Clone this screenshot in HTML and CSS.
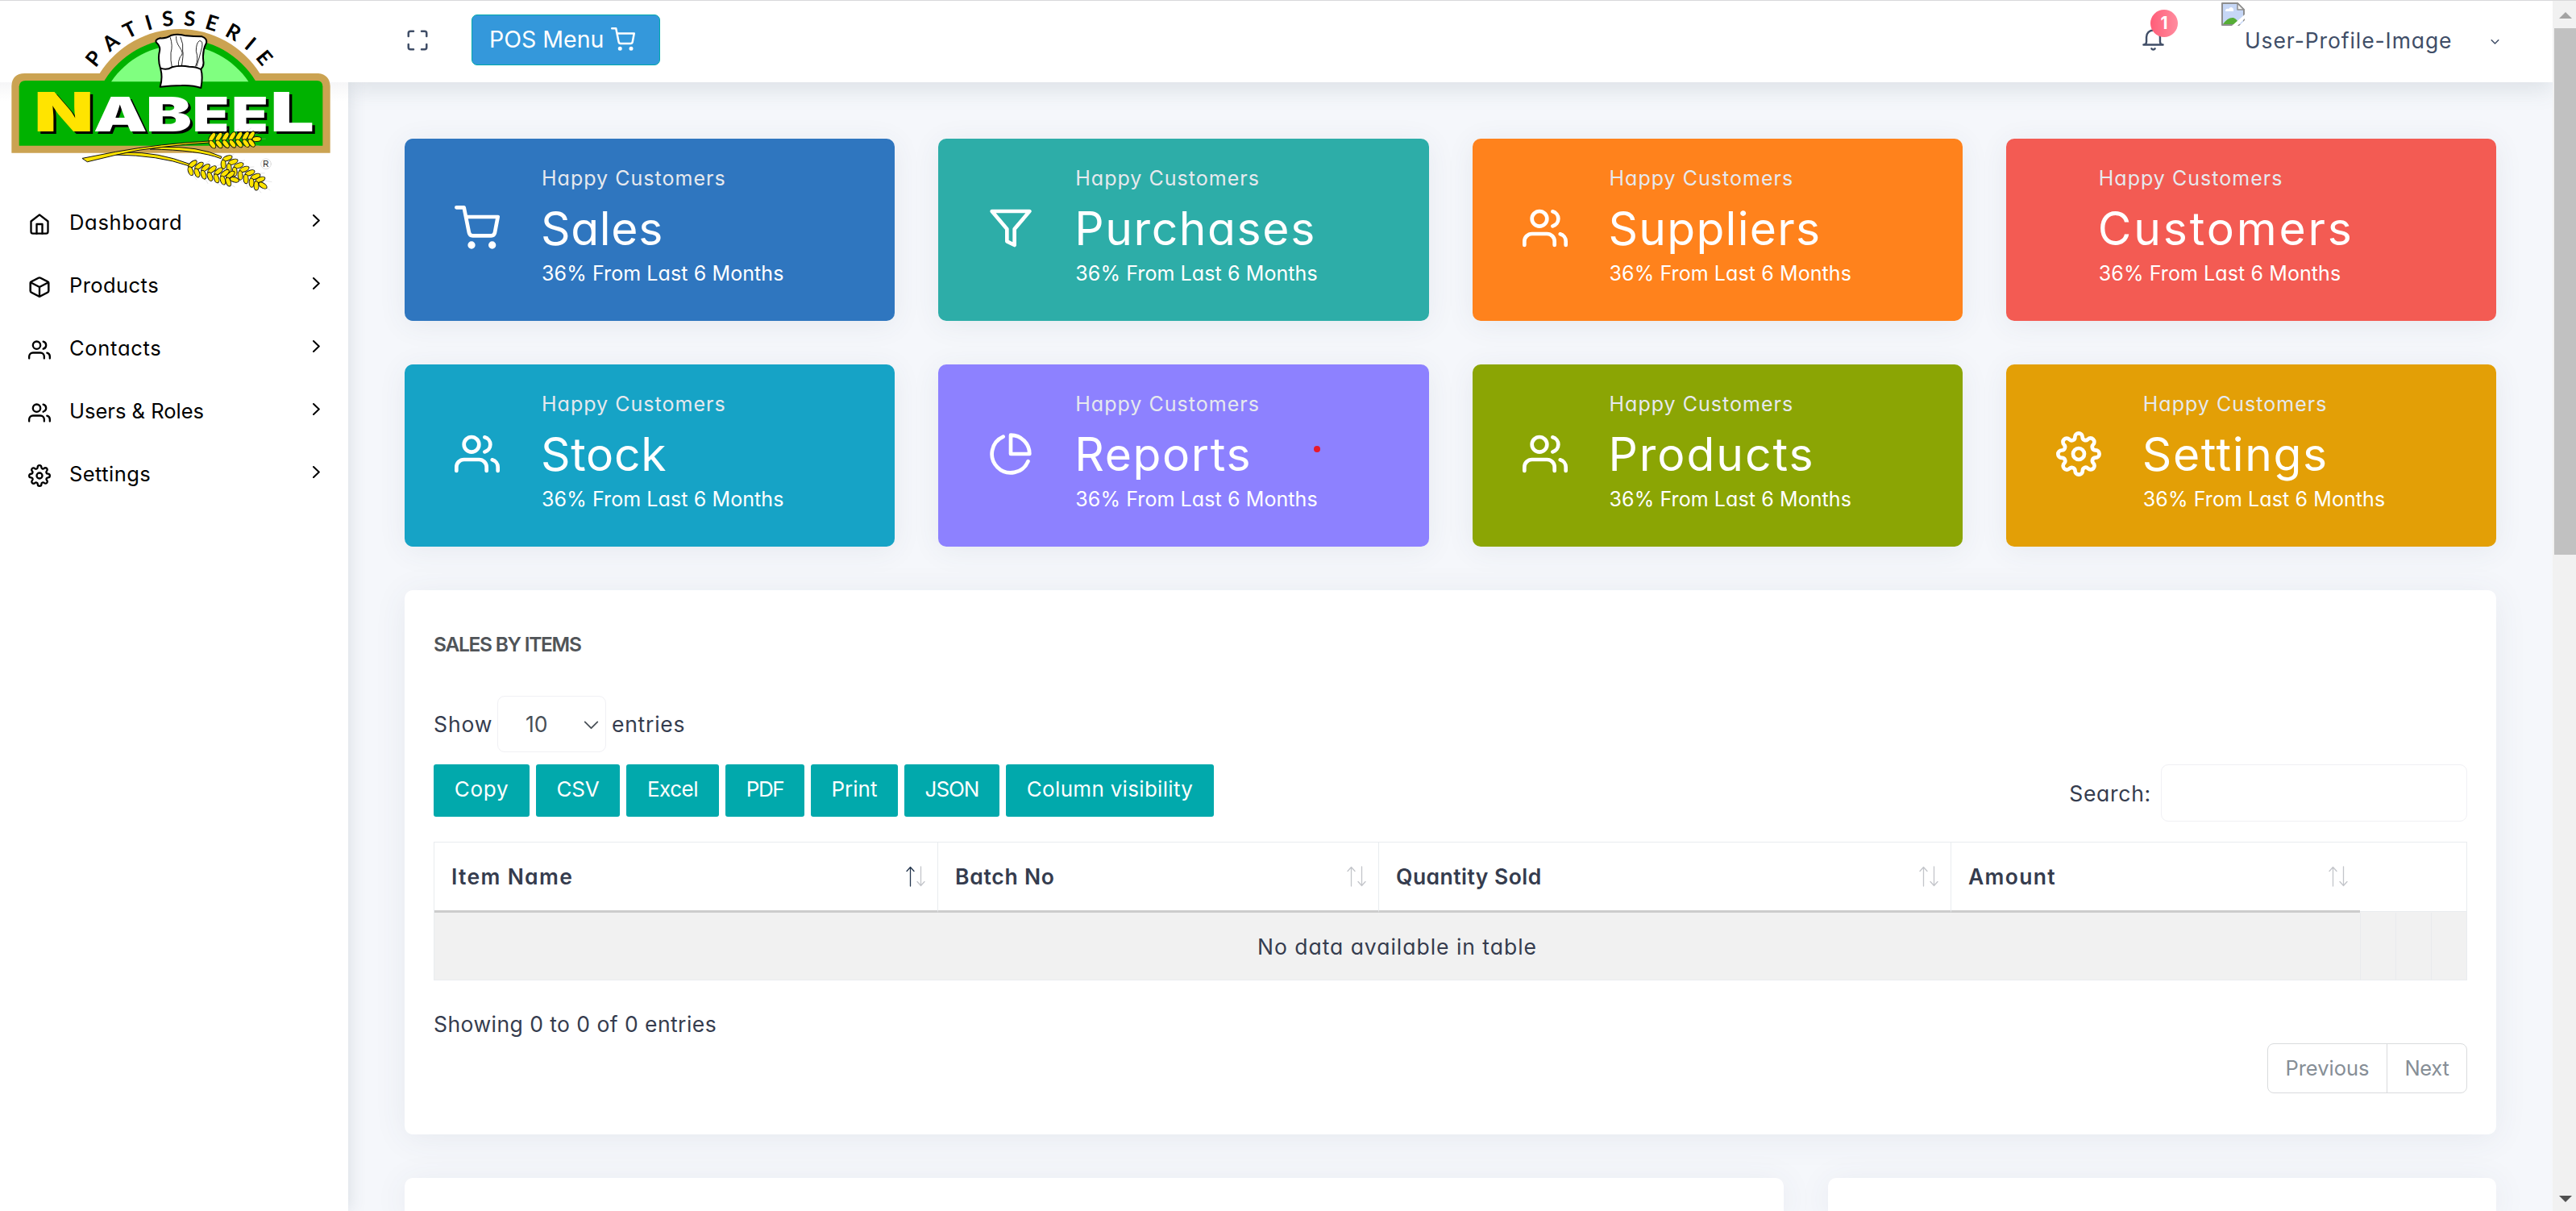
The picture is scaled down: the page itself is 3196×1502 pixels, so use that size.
FILE: index.html
```html
<!DOCTYPE html>
<html lang="en">
<head>
<meta charset="utf-8">
<title>Dashboard</title>
<link rel="stylesheet" href="styles.css">
</head>
<body>
<svg class="sprite" width="0" height="0" aria-hidden="true">
  <defs>
    <symbol id="cart" viewBox="0 0 24 24"><circle cx="9" cy="21" r="1"/><circle cx="20" cy="21" r="1"/><path d="M1 1h4l2.68 13.39a2 2 0 0 0 2 1.61h9.72a2 2 0 0 0 2-1.61L23 6H6"/></symbol>
    <symbol id="users" viewBox="0 0 24 24"><path d="M17 21v-2a4 4 0 0 0-4-4H5a4 4 0 0 0-4 4v2"/><circle cx="9" cy="7" r="4"/><path d="M23 21v-2a4 4 0 0 0-3-3.87M16 3.13a4 4 0 0 1 0 7.75"/></symbol>
    <symbol id="filter" viewBox="0 0 24 24"><path d="M22 3H2l8 9.46V19l4 2v-8.54L22 3z"/></symbol>
    <symbol id="pie" viewBox="0 0 24 24"><path d="M21.21 15.89A10 10 0 1 1 8 2.83"/><path d="M22 12A10 10 0 0 0 12 2v10z"/></symbol>
    <symbol id="gear" viewBox="0 0 24 24"><circle cx="12" cy="12" r="3"/><path d="M19.4 15a1.65 1.65 0 0 0 .33 1.82l.06.06a2 2 0 0 1 0 2.83 2 2 0 0 1-2.83 0l-.06-.06a1.65 1.65 0 0 0-1.82-.33 1.65 1.65 0 0 0-1 1.51V21a2 2 0 0 1-2 2 2 2 0 0 1-2-2v-.09A1.65 1.65 0 0 0 9 19.4a1.65 1.65 0 0 0-1.82.33l-.06.06a2 2 0 0 1-2.83 0 2 2 0 0 1 0-2.83l.06-.06a1.65 1.65 0 0 0 .33-1.82 1.65 1.65 0 0 0-1.51-1H3a2 2 0 0 1-2-2 2 2 0 0 1 2-2h.09A1.65 1.65 0 0 0 4.6 9a1.65 1.65 0 0 0-.33-1.82l-.06-.06a2 2 0 0 1 0-2.83 2 2 0 0 1 2.83 0l.06.06a1.65 1.65 0 0 0 1.82.33H9a1.65 1.65 0 0 0 1-1.51V3a2 2 0 0 1 2-2 2 2 0 0 1 2 2v.09a1.65 1.65 0 0 0 1 1.51 1.65 1.65 0 0 0 1.82-.33l.06-.06a2 2 0 0 1 2.83 0 2 2 0 0 1 0 2.83l-.06.06a1.65 1.65 0 0 0-.33 1.82V9a1.65 1.65 0 0 0 1.51 1H21a2 2 0 0 1 2 2 2 2 0 0 1-2 2h-.09a1.65 1.65 0 0 0-1.51 1z"/></symbol>
    <symbol id="home" viewBox="0 0 24 24"><path d="M3 9l9-7 9 7v11a2 2 0 0 1-2 2H5a2 2 0 0 1-2-2z"/><path d="M9 22V12h6v10"/></symbol>
    <symbol id="box" viewBox="0 0 24 24"><path d="M21 16V8a2 2 0 0 0-1-1.73l-7-4a2 2 0 0 0-2 0l-7 4A2 2 0 0 0 3 8v8a2 2 0 0 0 1 1.73l7 4a2 2 0 0 0 2 0l7-4A2 2 0 0 0 21 16z" transform="translate(-.9 0) scale(1.075 1)"/><path d="M2.5 7l9.5 5 9.5-5M12 22V12"/></symbol>
    <symbol id="maximize" viewBox="0 0 24 24"><path d="M8 3H5a2 2 0 0 0-2 2v3m18 0V5a2 2 0 0 0-2-2h-3m0 18h3a2 2 0 0 0 2-2v-3M3 16v3a2 2 0 0 0 2 2h3"/></symbol>
    <symbol id="bell" viewBox="0 0 24 24"><path d="M22 17H2a3 3 0 0 0 3-3V9a7 7 0 0 1 14 0v5a3 3 0 0 0 3 3zM13.73 21a2 2 0 0 1-3.46 0"/></symbol>
    <symbol id="right" viewBox="0 0 9 15"><path d="M1 1l6.8 6.5L1 14"/></symbol>
    <symbol id="down" viewBox="0 0 20 12"><path d="M1.500 1.500L10 10l8.500-8.500"/></symbol>
    <symbol id="sort" viewBox="0 0 24 26"><path class="up" d="M5.500 25V2M1 6.500L5.500 1.500l4.500 5"/><path d="M18.500 1v23M14 19.500l4.500 5 4.500-5"/></symbol>
    <g id="ear" fill="#ffe400" stroke="#111" stroke-width="3">
      <path d="M20-25l10-14M60-26l16-16M100-26l18-14M140-24l24-18M30 25l18 14M75 25l18 16M120 24l20 12M165 18l28 8M170-15l34-14M190 0h26" stroke="#bbb" stroke-width="1" fill="none"/>
      <g id="row"><ellipse cx="18" cy="-13" rx="19" ry="9" transform="rotate(-55 18 -13)"/><ellipse cx="18" cy="14" rx="17" ry="9" transform="rotate(55 18 14)"/></g>
      <use href="#row" x="25"/><use href="#row" x="50"/><use href="#row" x="75"/><use href="#row" x="100"/><use href="#row" x="125"/><use href="#row" x="146"/>
      <ellipse cx="184" cy="0" rx="17" ry="9"/>
    </g>
  </defs>
</svg>

<aside class="sidebar">
  <a class="brand">
    <svg viewBox="0 0 1320 750" width="440" height="250">
      <path d="M43 569V320Q45 273 92 273H371A352 352 0 0 1 967 273H1185Q1227 278 1229 320V569Z" fill="#cba352"/>
      <path d="M388 301A330 330 0 0 1 951 301Z" fill="#00b200"/>
      <path d="M71 542V322Q73 300 95 300H1180Q1201 301 1201 322V542Z" fill="#00b200"/>
      <path d="M414 304A308 308 0 0 1 925 304Z" fill="#80ff80"/>
      <path id="arc" d="M356 254A385 385 0 0 1 980 254" fill="none"/>
      <text class="arch"><textPath href="#arc" textLength="722" lengthAdjust="spacing">PATISSERIE</textPath></text>
      <g fill="#fff" stroke="#000" stroke-width="6" stroke-linejoin="round">
        <path d="M598 258Q586 222 594 190Q598 172 582 158Q575 148 596 142Q618 144 638 131Q664 124 692 133Q722 136 752 136Q772 144 768 160Q752 190 757 228Q760 246 748 257Q756 285 748 327Q716 316 676 318Q636 318 596 323Q606 290 598 258Z"/>
        <path d="M598 254Q620 262 640 250Q670 242 704 248Q730 248 748 258" fill="none"/>
        <path d="M634 140Q644 170 636 196Q634 225 640 250M656 136C652 175 696 190 670 212Q662 230 664 246M672 138Q684 165 680 190Q684 200 676 246M732 246Q742 215 752 175Q756 150 742 152Q730 160 730 190Q740 220 728 246" stroke-width="2.500" fill="none"/>
      </g>
      <g class="wordmark">
        <g fill="#000" transform="translate(10 7)">
          <text class="cap" x="127" y="490" textLength="222" lengthAdjust="spacingAndGlyphs">N</text><text x="348" y="490" textLength="200" lengthAdjust="spacingAndGlyphs">A</text><text x="543" y="490" textLength="171" lengthAdjust="spacingAndGlyphs">B</text><text x="716" y="490" textLength="137" lengthAdjust="spacingAndGlyphs">E</text><text x="862" y="490" textLength="137" lengthAdjust="spacingAndGlyphs">E</text><text class="cap" x="1006" y="490" textLength="164" lengthAdjust="spacingAndGlyphs">L</text>
        </g>
        <g fill="#fff">
          <text class="cap yellow" x="127" y="490" textLength="222" lengthAdjust="spacingAndGlyphs">N</text><text x="348" y="490" textLength="200" lengthAdjust="spacingAndGlyphs">A</text><text x="543" y="490" textLength="171" lengthAdjust="spacingAndGlyphs">B</text><text x="716" y="490" textLength="137" lengthAdjust="spacingAndGlyphs">E</text><text x="862" y="490" textLength="137" lengthAdjust="spacingAndGlyphs">E</text><text class="cap" x="1006" y="490" textLength="164" lengthAdjust="spacingAndGlyphs">L</text>
        </g>
      </g>
      <g fill="#ffe400" stroke="#111" stroke-width="3">
        <path d="M468 567Q590 565 705 610L702 617Q590 578 430 576Z"/>
        <path d="M600 547Q740 543 825 583L822 590Q740 558 560 555Z"/>
        <path d="M307 589L430 565Q600 534 778 525V531Q690 536 606 547Q520 555 430 577L326 602Z"/>
      </g>
      <use href="#ear" transform="translate(772 524) rotate(-2)"/>
      <use href="#ear" transform="translate(824 590) rotate(33)"/>
      <use href="#ear" transform="translate(696 618) rotate(16)"/>
      <circle cx="990" cy="610" r="19" fill="#fff" stroke="#ccc"/>
      <text class="reg" x="979" y="621">R</text>
    </svg>
  </a>
  <nav class="menu">
    <a class="item"><svg class="ico"><use href="#home"/></svg><span class="label t4">Dashboard</span><svg class="go"><use href="#right"/></svg></a>
    <a class="item"><svg class="ico"><use href="#box"/></svg><span class="label t3">Products</span><svg class="go"><use href="#right"/></svg></a>
    <a class="item"><svg class="ico"><use href="#users"/></svg><span class="label t4">Contacts</span><svg class="go"><use href="#right"/></svg></a>
    <a class="item"><svg class="ico"><use href="#users"/></svg><span class="label">Users &amp; Roles</span><svg class="go"><use href="#right"/></svg></a>
    <a class="item"><svg class="ico"><use href="#gear"/></svg><span class="label t3">Settings</span><svg class="go"><use href="#right"/></svg></a>
  </nav>
</aside>

<div class="page">
  <header class="topbar">
    <svg class="full"><use href="#maximize"/></svg>
    <a class="pos"><span>POS Menu</span><svg><use href="#cart"/></svg></a>
    <div class="notify"><svg><use href="#bell"/></svg><span class="badge">1</span></div>
    <div class="profile">
      <svg class="broken" viewBox="0 0 29 29"><path d="M1 1h19l8 8v19H1z" fill="#c6d7f6" stroke="#8e8e8e" stroke-width="2"/><path d="M5 11q0-4 4-3 3-4 6 0v3z" fill="#fff"/><path d="M2 27q6-9 13-8 5 2 7 8z" fill="#56ad36"/><path d="M20 1v8h8z" fill="#f4f4f4" stroke="#8e8e8e" stroke-width="1.500"/><path d="M13 29L29 15v5L20 29z" fill="#fff"/><path d="M22 29l7-7v7z" fill="#fff"/></svg>
      <span class="t45">User-Profile-Image</span>
      <svg class="caret"><use href="#down"/></svg>
    </div>
  </header>

  <main class="content">
    <section class="cards">
      <a class="card blue"><svg><use href="#cart"/></svg><div><p class="sub">Happy Customers</p><h2 class="t25">Sales</h2><p class="note">36% From Last 6 Months</p></div></a>
      <a class="card teal"><svg><use href="#filter"/></svg><div><p class="sub">Happy Customers</p><h2 class="t4">Purchases</h2><p class="note">36% From Last 6 Months</p></div></a>
      <a class="card orange"><svg><use href="#users"/></svg><div><p class="sub">Happy Customers</p><h2 class="t35">Suppliers</h2><p class="note">36% From Last 6 Months</p></div></a>
      <a class="card red"><div><p class="sub">Happy Customers</p><h2 class="t6">Customers</h2><p class="note">36% From Last 6 Months</p></div></a>
      <a class="card cyan"><svg><use href="#users"/></svg><div><p class="sub">Happy Customers</p><h2 class="t25">Stock</h2><p class="note">36% From Last 6 Months</p></div></a>
      <a class="card violet"><svg><use href="#pie"/></svg><div><p class="sub">Happy Customers</p><h2 class="t4">Reports</h2><p class="note">36% From Last 6 Months</p></div><i class="dot"></i></a>
      <a class="card olive"><svg><use href="#users"/></svg><div><p class="sub">Happy Customers</p><h2 class="t45">Products</h2><p class="note">36% From Last 6 Months</p></div></a>
      <a class="card gold"><svg><use href="#gear"/></svg><div><p class="sub">Happy Customers</p><h2 class="t4">Settings</h2><p class="note">36% From Last 6 Months</p></div></a>
    </section>

    <section class="panel report">
      <h5 class="title">SALES BY ITEMS</h5>
      <div class="length"><span class="show t45">Show</span><div class="select"><span>10</span><svg><use href="#down"/></svg></div><span class="t4">entries</span></div>
      <div class="tools">
        <div class="buttons">
          <button class="w119 t4">Copy</button><button class="w104 n1">CSV</button><button class="w115 n2">Excel</button><button class="w98 n5">PDF</button><button class="w108">Print</button><button class="w118 n4">JSON</button><button class="w258 t15">Column visibility</button>
        </div>
        <label class="search"><span class="t4">Search:</span><input type="text"></label>
      </div>
      <table>
        <colgroup><col class="c1"><col class="c2"><col class="c3"><col class="c4"><col class="c5"><col class="c5"><col class="c5"></colgroup>
        <thead><tr>
          <th><div class="th active"><span class="t6">Item Name</span><svg><use href="#sort"/></svg></div></th>
          <th><div class="th"><span class="t4">Batch No</span><svg><use href="#sort"/></svg></div></th>
          <th><div class="th"><span class="t3">Quantity Sold</span><svg><use href="#sort"/></svg></div></th>
          <th><div class="th"><span class="t6">Amount</span><svg><use href="#sort"/></svg></div></th>
          <th class="blank" colspan="3"></th>
        </tr></thead>
        <tbody><tr><td colspan="4" class="t5">No data available in table</td><td></td><td></td><td></td></tr></tbody>
      </table>
      <p class="info t3">Showing 0 to 0 of 0 entries</p>
      <div class="pager"><a class="prev">Previous</a><a class="next n1">Next</a></div>
    </section>

    <section class="bottom"><div class="panel"></div><div class="panel"></div></section>
  </main>
</div>

<div class="scroll">
  <svg viewBox="0 0 16 8"><path d="M0 8L8 0l8 8z" fill="#a3a3a3"/></svg>
  <i class="thumb"></i>
  <svg class="bottom-arrow" viewBox="0 0 16 8"><path d="M0 0l8 8 8-8z" fill="#505050"/></svg>
</div>
</body>
</html>
```
FILE: styles.css
```css
* { box-sizing: border-box; margin: 0; padding: 0; }

body {
  display: flex;
  height: 1502px;
  overflow: hidden;
  border-top: 1px solid #d8d8da;
  background: #f5f7fb;
  color: #353c4e;
  font-family: Inter, "Noto Sans", sans-serif;
  font-size: 26.500px;
  line-height: 36px;
  font-feature-settings: "cv11";
  white-space: nowrap;
}

svg { flex: none; fill: none; stroke: currentColor; stroke-width: 2; stroke-linecap: round; stroke-linejoin: round; overflow: visible; }
.sprite { position: absolute; }

/* letter spacing steps */
.t15 { letter-spacing: .012em; }
.t25 { letter-spacing: .012em; }
.t3 { letter-spacing: .017em; }
.t35 { letter-spacing: .022em; }
.t4 { letter-spacing: .028em; }
.t45 { letter-spacing: .034em; }
.t5 { letter-spacing: .037em; }
.t6 { letter-spacing: .05em; }
.n1 { letter-spacing: -.01em; }
.n2 { letter-spacing: -.02em; }
.n4 { letter-spacing: -.04em; }
.n5 { letter-spacing: -.055em; }

/* sidebar */
.sidebar {
  position: relative;
  z-index: 2;
  flex: none;
  width: 432px;
  background: linear-gradient(#fff 101px, #f6f6f7 101px, #fff 125px);
  box-shadow: 1px 0 20px rgba(69, 90, 100, .16);
}
.brand { display: flex; align-items: flex-start; height: 236.500px; }
.brand svg { margin-top: -1px; stroke: none; }
.arch { font: 700 77px Lato, sans-serif; fill: #000; }
.wordmark text { font: 900 179px Inter, sans-serif; }
.wordmark .cap { font-size: 204px; }
.wordmark .yellow { fill: #ffe400; }
.reg { font: 30px "Liberation Sans", sans-serif; fill: #111; }

.item { display: flex; align-items: center; height: 77.800px; padding: 0 35px 0 35px; color: #000; font-size: 25.500px; }
.ico { width: 28px; height: 28px; margin-top: 4px; }
.label { margin-left: 23px; flex: 1; }
.go { width: 9px; height: 15px; margin-bottom: 5px; }

/* top bar */
.page { flex: 1; min-width: 0; display: flex; flex-direction: column; }
.topbar {
  position: relative;
  z-index: 3;
  display: flex;
  align-items: center;
  flex: none;
  height: 101px;
  padding: 0 66px 4px 71px;
  background: #fff;
  box-shadow: 0 10px 25px rgba(69, 90, 100, .13);
  clip-path: inset(0 0 -40px 0);
  color: #404e67;
}
.full { width: 30px; height: 30px; margin-top: 1px; }
.pos {
  display: flex;
  align-items: center;
  width: 234px;
  height: 63px;
  margin-left: 52px;
  padding: 0 0 2px 21px;
  border: 1px solid #01a9ac;
  border-radius: 7px;
  background: #3498db;
  color: #fff;
  font-size: 28.500px;
}
.pos svg { width: 30px; height: 30px; margin-left: 9px; }
.notify { position: relative; margin-left: auto; width: 29px; height: 29px; margin-right: 100px; }
.notify svg { width: 29px; height: 29px; }
.badge {
  position: absolute;
  left: 11px;
  top: -23px;
  width: 34px;
  height: 34px;
  border-radius: 50%;
  background: linear-gradient(90deg, #ff5d78, #ff8c9f);
  color: #fff;
  font-size: 21px;
  font-weight: 700;
  line-height: 34px;
  text-align: center;
}
.profile { display: flex; align-items: center; }
.broken { width: 29px; height: 29px; stroke: none; margin: -64px 1px 0 -30px; }
.profile span { margin-left: -1px; width: 259px; }
.caret { width: 11px; height: 6px; margin-left: 46px; margin-top: 4px; stroke-width: 3; }

/* cards */
.content { padding: 70px 70px 0; }
.cards { display: grid; grid-template-columns: repeat(4, 1fr); gap: 54px; }
.card {
  position: relative;
  display: flex;
  height: 226px;
  padding: 29px 0 0 62px;
  border-radius: 10px;
  color: #fff;
  box-shadow: 0 5px 35px rgba(69, 80, 100, .08);
}
.card svg { width: 56px; height: 56px; margin: 53.500px 52px 0 0; }
.sub { color: #e6e9ee; font-size: 25px; line-height: 40px; letter-spacing: .041em; }
.card h2 { font-size: 57px; font-weight: 400; line-height: 86px; margin-left: -1px; }
.note { font-size: 25px; line-height: 24px; letter-spacing: .004em; }
.blue { background: #2f76bf; }
.teal { background: #2dada8; }
.orange { background: #ff821c; }
.red { background: #f35b53; padding-left: 115px; }
.cyan { background: #16a3c6; }
.violet { background: #8d81ff; }
.olive { background: #8ba504; }
.gold { background: #e39f06; }
.dot { position: absolute; left: 466px; top: 101px; width: 8px; height: 8px; border-radius: 50%; background: #e8192c; }

/* report panel */
.panel { border-radius: 10px; background: #fff; box-shadow: 0 5px 40px rgba(69, 80, 100, .08); }
.report { height: 675px; margin-top: 54px; padding: 49px 36px 0; }
.title { color: #505458; font-size: 24.500px; font-weight: 600; letter-spacing: -.052em; }
.length { display: flex; align-items: center; height: 70px; margin-top: 46px; }
.show { width: 79px; }
.select {
  display: flex;
  align-items: center;
  justify-content: space-between;
  width: 135px;
  height: 70px;
  margin-right: 7px;
  padding: 0 8px 0 34px;
  border: 1px solid #f0f0f4;
  border-radius: 9px;
  color: #495057;
}
.select svg { width: 19px; height: 11px; margin-top: 2px; }
.tools { display: flex; justify-content: space-between; height: 71px; margin-top: 15px; }
.buttons { display: flex; gap: 8px; }
button {
  height: 65px;
  padding-bottom: 3px;
  border: 0;
  border-radius: 3px;
  background: #01a9ac;
  color: #fff;
  font: inherit;
  font-feature-settings: inherit;
  font-size: 26px;
}
.w119 { width: 119px; } .w104 { width: 104px; } .w115 { width: 115px; } .w98 { width: 98px; }
.w108 { width: 108px; } .w118 { width: 118px; } .w258 { width: 258px; }
.search { display: flex; align-items: center; gap: 12px; }
.search input { width: 380px; height: 71px; border: 1px solid #f0f0f4; border-radius: 9px; }

table { width: 2523px; margin-top: 25px; table-layout: fixed; border-collapse: separate; border-spacing: 0; border: 1px solid #e9ecef; border-width: 1px 1px 0; }
.c1 { width: 624px; } .c2 { width: 547px; } .c3 { width: 710px; } .c4 { width: 508px; } .c5 { width: 44px; }
th { height: 87px; border-bottom: 3px solid #ccc; text-align: left; font-weight: 600; }
th + th { border-left: 1px solid #e9ecef; }
.th { display: flex; align-items: center; justify-content: space-between; padding: 0 15px 0 21px; }
.th svg { width: 24px; height: 26px; stroke-width: 1.300; stroke: #c3c5ca; }
.up { stroke: var(--up, #c3c5ca); }
.active { --up: #24364e; }
th.blank { border-left: 0; border-bottom: 1px solid #f1f1f1; background: linear-gradient(#fff 85px, #e9ecef 85px); }
td { height: 84px; border-bottom: 1px solid #e9ecef; background: #f1f1f1; text-align: center; }
td + td { border-left: 1px solid #e9ebed; }
.info { margin-top: 36px; }
.pager { display: flex; width: 248px; height: 62px; margin: 6px 0 0 auto; border: 1px solid #d9dbdd; border-radius: 8px; color: #868e96; font-size: 25.500px; line-height: 60px; text-align: center; }
.prev { width: 148px; border-right: 1px solid #d9dbdd; }
.next { flex: 1; }

.bottom { display: grid; grid-template-columns: 1711px 829px; gap: 55px; margin-top: 54px; }
.bottom .panel { height: 41px; border-radius: 10px 10px 0 0; }

/* scrollbar */
.scroll { flex: none; display: flex; flex-direction: column; align-items: center; width: 29px; padding: 14px 0 11px 2px; background: #f1f1f1; }
.scroll svg { width: 16px; height: 8px; stroke: none; }
.thumb { width: 27px; height: 653px; margin-top: 12px; background: #c1c1c1; }
.bottom-arrow { margin-top: auto; }
```
